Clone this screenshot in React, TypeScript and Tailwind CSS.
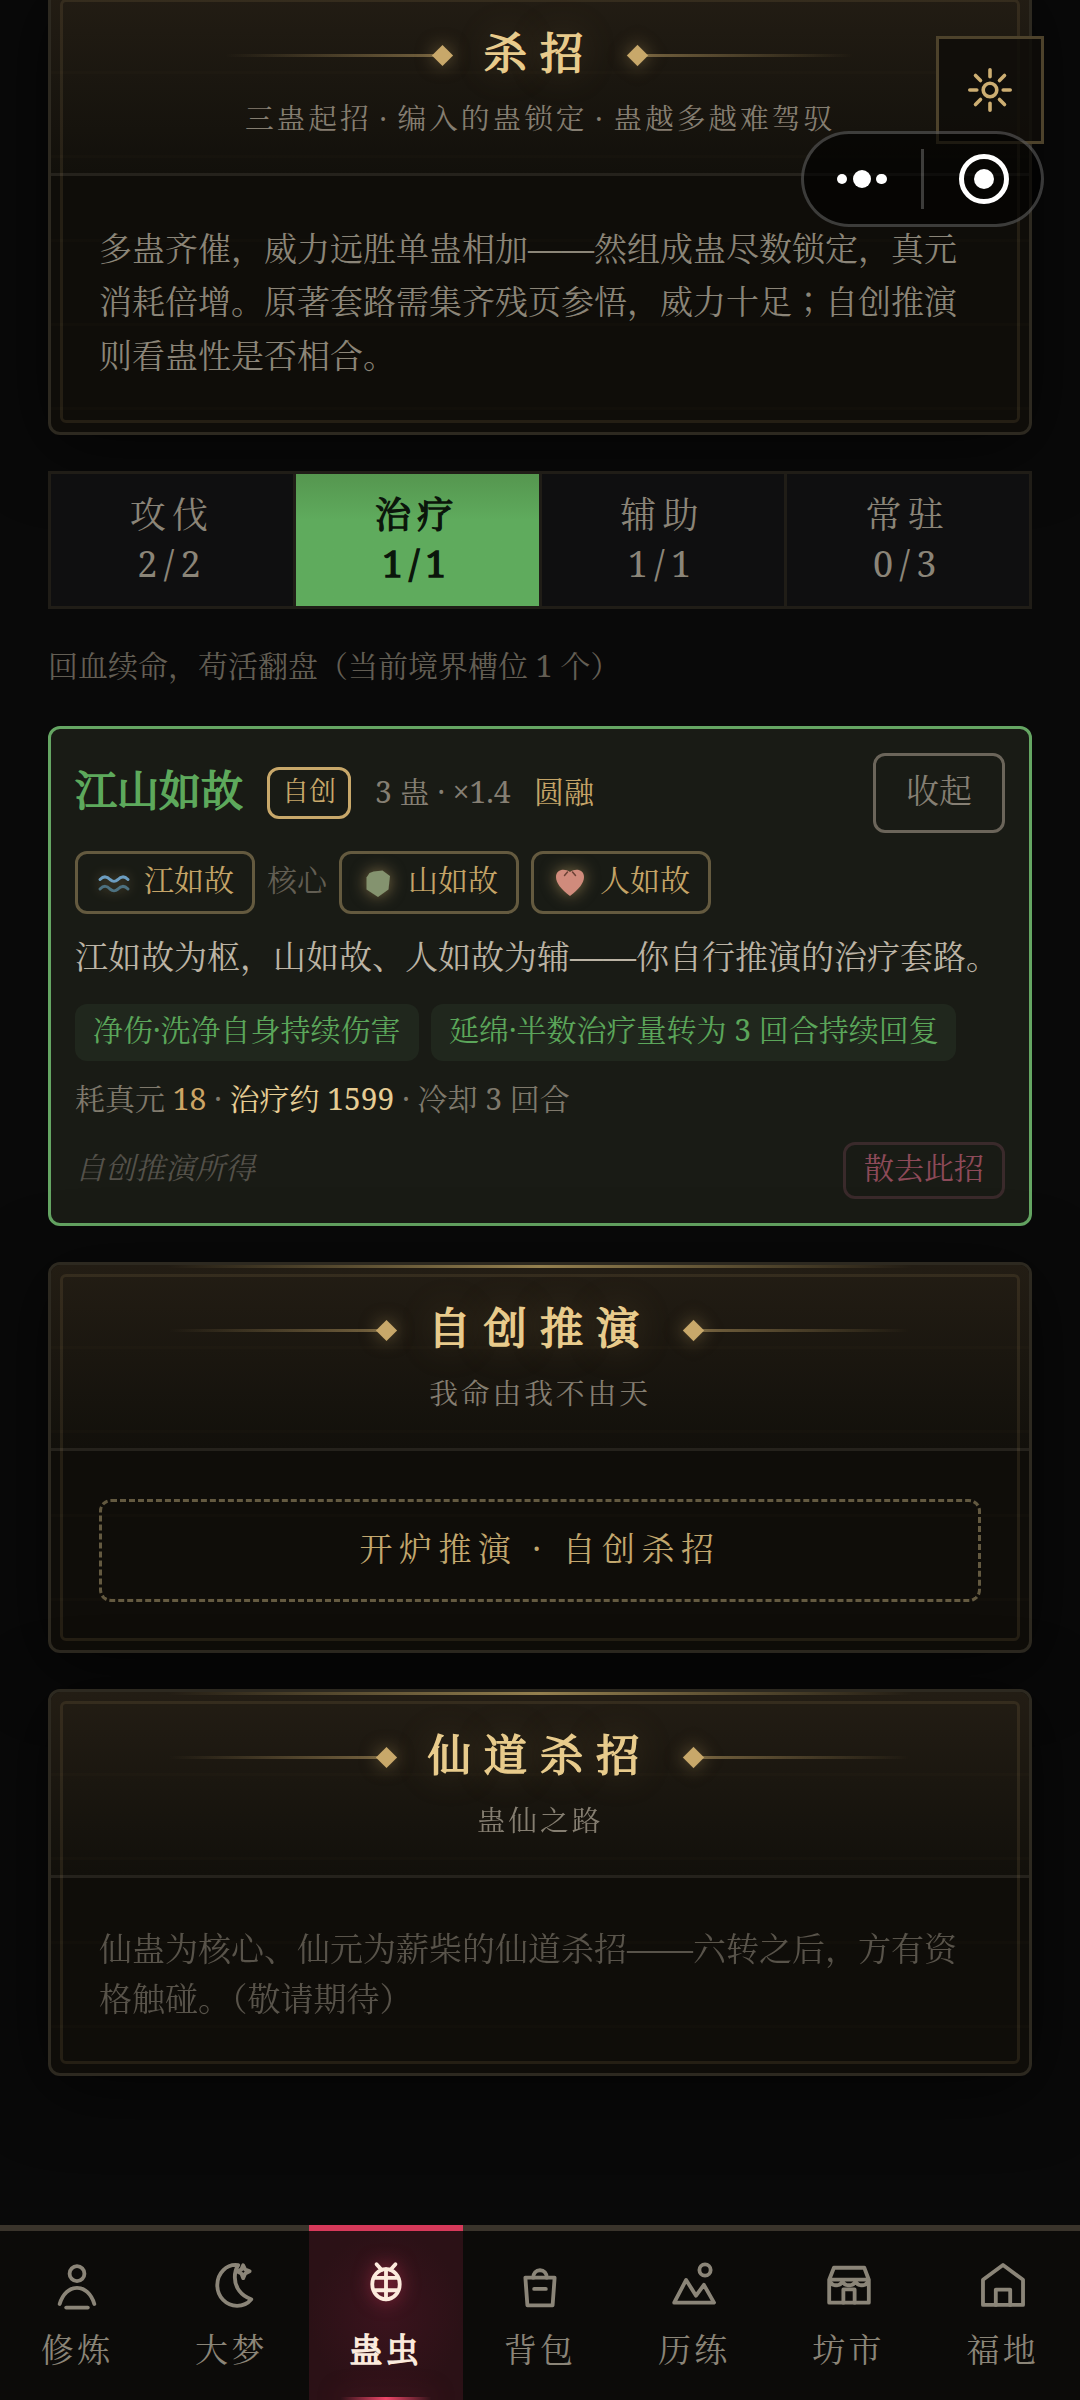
import type { ReactNode } from 'react';
import clsx from 'clsx';

interface PanelProps {
  title: string;
  subtitle: string;
  className?: string;
  children: ReactNode;
}

// Ornament beside a panel title: a fading rule that ends in a diamond
function Ornament({ flip = false }: { flip?: boolean }) {
  return (
    <div className={clsx('flex items-center', flip && 'rotate-180')}>
      <div className="h-[3px] w-[210px] bg-linear-to-r from-transparent to-[#c8a86a]/50" />
      <div className="w-[15px] h-[15px] rotate-45 bg-[#c8a86a] shadow-[0_0_18px_rgba(200,168,106,0.5)]" />
    </div>
  );
}

function Panel({ title, subtitle, className, children }: PanelProps) {
  return (
    <section
      className={clsx(
        'relative shrink-0 rounded-[12px] border-[3px] border-[#2d2920] bg-[#0f0d09] shadow-[0_12px_72px_rgba(0,0,0,0.6)]',
        className,
      )}
    >
      <header className="h-[186px] pt-[33px] rounded-t-[9px] border-b-[3px] border-[#25221c] bg-linear-to-b from-[#231d14] to-[#12100b]">
        <div className="flex h-[65px] items-center justify-center gap-[34px]">
          <Ornament />
          <h2 className="-translate-y-[3px] text-[43.2px] leading-[65px] tracking-[12.96px] text-[#e8cb8c] [-webkit-text-stroke:1.6px_#e8cb8c] [text-shadow:0_0_36px_rgba(200,168,106,0.35)]">
            {title}
          </h2>
          <Ornament flip />
        </div>
        <p className="mt-[7px] text-center text-[28.8px] leading-[46px] tracking-[2.88px] [word-spacing:-2.5px] text-[#857e71]">
          {subtitle}
        </p>
      </header>
      <div className="p-[48px]">{children}</div>

      {/* decorations */}
      <div className="absolute inset-x-[12%] top-0 h-[3px] bg-linear-to-r from-transparent via-[#94804f] to-transparent" />
      <div className="absolute inset-[9px] rounded-[6px] border-[3px] border-[#c8a86a]/12 pointer-events-none" />
      <div className="absolute inset-0 pointer-events-none bg-[repeating-linear-gradient(180deg,transparent_0px,transparent_81px,rgba(200,168,106,0.02)_81px,rgba(200,168,106,0.02)_84px)]" />
    </section>
  );
}

const tabs = [
  { name: '攻伐', count: '2/2' },
  { name: '治疗', count: '1/1', active: true },
  { name: '辅助', count: '1/1' },
  { name: '常驻', count: '0/3' },
];

function WaveIcon() {
  return (
    <svg viewBox="0 0 36 36" className="w-[36px] h-[36px] drop-shadow-[0_0_6px_rgba(200,168,106,0.4)]" fill="none" strokeWidth="3" strokeLinecap="round">
      <path d="M4 14.500c4-4 7-3 10 0 3 2.500 5 2.500 8 0 3-3 6-4 10 0" stroke="#6c9dc0" />
      <path d="M4 24c4-4 7-3 10 0 3 2.500 5 2.500 8 0 3-3 6-4 10 0" stroke="#4d7180" />
    </svg>
  );
}

function StoneIcon() {
  return (
    <svg viewBox="0 0 36 36" className="w-[36px] h-[36px] drop-shadow-[0_0_8px_rgba(200,168,106,0.6)]">
      <path d="M9.500 8l4-1.500 9-1 7.500 5.500-1.500 13.500-10.500 7.500-11.500-7.500v-12z" fill="#84936f" />
    </svg>
  );
}

function HeartIcon() {
  return (
    <svg viewBox="0 0 36 36" className="w-[36px] h-[36px] drop-shadow-[0_0_8px_rgba(200,168,106,0.6)]">
      <path d="M18 31C9 24 4 18 4 12c0-8 9-9 14-5 5-4 14-3 14 5 0 6-5 12-14 19z" fill="#d08b7c" />
      <path d="M12.500 10.500l3-3.500M23.500 10.500l-3-3.500" stroke="#6b4236" strokeWidth="1.500" strokeLinecap="round" />
    </svg>
  );
}

function GuChip({ icon, name }: { icon: ReactNode; name: string }) {
  return (
    <span className="flex h-[63px] items-center gap-[12px] rounded-[12px] border-[3px] border-[#645a3f] px-[18px] text-[30px] text-[#c4a467]">
      {icon}
      <span className="-translate-y-[3px]">{name}</span>
    </span>
  );
}

const navItems = [
  {
    label: '修炼',
    icon: (
      <>
        <circle cx="12" cy="6.5" r="3.3" />
        <path d="M4.3 20C5.6 15.6 8.6 12.8 12 12.8s6.400 2.800 7.700 7.200" />
        <path d="M7.200 21.600h9.600" />
      </>
    ),
  },
  {
    label: '大梦',
    icon: (
      <>
        <path d="M15.200 2.700C10 2 5.900 6.300 5.900 11.600c0 5.100 3.900 9.200 8.800 9.200 2.500 0 4.800-1 6.300-2.900-4.400-1.400-7.300-5.200-7.300-9.800 0-2 .5-3.900 1.500-5.400z" />
        <path d="M17.400 2.800l.9 1.900 2 .8-2 .9-.9 2.100-.8-2.100-2-.9 2-.8z" />
      </>
    ),
  },
  {
    label: '蛊虫',
    active: true,
    icon: (
      <>
        <ellipse cx="12" cy="11.200" rx="6.100" ry="6.700" />
        <path d="M12 4.500v13.400M7.200 8.400h9.600M7.200 13.900h9.600M10 4.800L7.800 2.300M14 4.800l2.200-2.500" />
      </>
    ),
  },
  {
    label: '背包',
    icon: (
      <>
        <path d="M5.500 8.300h13l-.9 12.300H6.400z" />
        <path d="M9 8.300C9 6.300 10.200 5 12 5s3 1.300 3 3.300M9.400 13.300h5.200" />
      </>
    ),
  },
  {
    label: '历练',
    icon: (
      <>
        <path d="M3.200 19.400L8.500 9.300l4.400 7 3.500-4.800 4.500 7.900z" />
        <circle cx="16.900" cy="4.900" r="2.500" />
      </>
    ),
  },
  {
    label: '坊市',
    icon: (
      <>
        <path d="M5.300 3.900h13.500l2 5.300v10.200H3.200V9.200zM3.200 9.200h17.600" />
        <path d="M3.500 9.500c.6 2.900 5 2.900 5.600 0 .6 2.900 5.200 2.900 5.800 0 .6 2.900 5 2.900 5.600 0" />
        <path d="M9.500 19.400v-5.900h5v5.900" />
      </>
    ),
  },
  {
    label: '福地',
    icon: (
      <>
        <path d="M12 2.700l8.900 6.500v11.200H3.100V9.200z" />
        <path d="M8.800 20.400v-6.800h6.400v6.800" />
      </>
    ),
  },
];

export default function App() {
  return (
    <div
      lang="zh-CN"
      className="relative flex h-[2400px] w-[1080px] flex-col overflow-hidden bg-[#090909] font-['Noto_Serif','Noto_Serif_CJK_SC','Noto_Sans_CJK_SC',serif] font-normal"
    >
      <main className="flex flex-1 flex-col px-[48px]">
        <Panel title="杀招" subtitle="三蛊起招 · 编入的蛊锁定 · 蛊越多越难驾驭" className="-mt-[13px] h-[448px]">
          <p className="-translate-y-[2px] text-[33px] leading-[53.33px] text-[#8b8578]">
            多蛊齐催，威力远胜单蛊相加——然组成蛊尽数锁定，真元消耗倍增。原著套路需集齐残页参悟，威力十足
            <span lang="zh-TW" className="font-['Noto_Serif_CJK_TC','Noto_Sans_CJK_TC',serif] leading-none">；</span>
            自创推演则看蛊性是否相合。
          </p>
        </Panel>

        <div className="relative mt-[36px] grid h-[138px] shrink-0 grid-cols-4 gap-[3px] border-[3px] border-[#201d17] bg-[#201d17]">
          {tabs.map((tab) => (
            <button
              key={tab.name}
              className={clsx(
                'flex flex-col items-center justify-center pb-[3px] text-[36px] leading-[49px] tracking-[6.4px]',
                tab.active
                  ? 'bg-[#5ca75a] bg-linear-to-b from-[#55964f] to-[#5fab5d] to-35% text-[#0b150b] [-webkit-text-stroke:1.4px_#0b150b]'
                  : 'bg-[#0f0f10] text-[#8b8578]',
              )}
            >
              <span>{tab.name}</span>
              <span>{tab.count}</span>
            </button>
          ))}
        </div>

        <p className="relative flex h-[117px] shrink-0 items-center pb-[5px] text-[30px] text-[#635e54]">
          回血续命，苟活翻盘（当前境界槽位 1 个）
        </p>

        <section className="relative flex h-[500px] shrink-0 flex-col gap-[18px] rounded-[12px] border-[3px] border-[#65a663] bg-[#191b15] p-[24px] text-[30px]">
          <div className="flex h-[80px] shrink-0 items-center">
            <h3 className="-translate-y-[4px] text-[42px] text-[#5da95c] [-webkit-text-stroke:1.6px_#5da95c]">江山如故</h3>
            <span className="ml-[24px] flex h-[52px] items-center rounded-[12px] border-[3px] border-[#c8a86a] px-[12px] pb-[3px] text-[27px] text-[#c8a86a]">
              自创
            </span>
            <span className="ml-[24px] w-[135px] pb-[3px] whitespace-nowrap text-[#857f73]">3 蛊 · ×1.4</span>
            <span className="ml-[24px] pb-[3px] text-[#c4a467]">圆融</span>
            <button className="ml-auto flex h-[80px] w-[132px] items-center justify-center rounded-[12px] border-[3px] border-[#6b655a] pb-[5px] text-[33px] text-[#857f73]">
              收起
            </button>
          </div>

          <div className="flex shrink-0 items-center gap-[12px]">
            <GuChip icon={<WaveIcon />} name="江如故" />
            <span className="-translate-y-[3px] text-[#625e53]">核心</span>
            <GuChip icon={<StoneIcon />} name="山如故" />
            <GuChip icon={<HeartIcon />} name="人如故" />
          </div>

          <p className="-translate-y-[2px] shrink-0 whitespace-nowrap text-[33px] leading-[54px] text-[#bcb4a5]">
            江如故为枢，山如故、人如故为辅——你自行推演的治疗套路。
          </p>

          <div className="flex shrink-0 gap-[12px] leading-[45px] whitespace-nowrap text-[#5ba65a]">
            <span className="w-[344px] rounded-[12px] bg-[#20271d] px-[18px] pt-[3px] pb-[9px]">净伤·洗净自身持续伤害</span>
            <span className="w-[525px] rounded-[12px] bg-[#20271d] px-[18px] pt-[3px] pb-[9px]">延绵·半数治疗量转为 3 回合持续回复</span>
          </div>

          <p className="-translate-y-[3px] shrink-0 leading-[45px] text-[#7f796c]">
            耗真元 <span className="text-[#cda566]">18</span> · <span className="text-[#e6cd94]">治疗约 1599</span> · 冷却 3 回合
          </p>

          <div className="flex shrink-0 items-center justify-between">
            <span className="-translate-y-[3px] italic text-[#54514a]">自创推演所得</span>
            <button className="h-[57px] rounded-[12px] border-[3px] border-[#3a2a2b] px-[18px] pb-[6px] text-[#8d4a59]">散去此招</button>
          </div>
        </section>

        <Panel title="自创推演" subtitle="我命由我不由天" className="mt-[36px] h-[391px]">
          <button className="block h-[103px] w-full rounded-[12px] border-[3px] border-dashed border-[#635940] pb-[4px] text-[33px] tracking-[6.500px] text-[#c2a76e]">
            开炉推演 · 自创杀招
          </button>
        </Panel>

        <Panel title="仙道杀招" subtitle="蛊仙之路" className="mt-[36px]">
          <p className="-translate-y-[2px] text-[33px] leading-[49.5px] text-[#58534a]">
            仙蛊为核心、仙元为薪柴的仙道杀招——六转之后，方有资格触碰。（敬请期待）
          </p>
        </Panel>
      </main>

      <nav className="relative grid h-[175px] shrink-0 grid-cols-7 bg-[#0c0b09]">
        {navItems.map((item) => (
          <button
            key={item.label}
            className={clsx(
              'relative flex flex-col items-center border-t-[6px] pt-[28px]',
              item.active
                ? 'border-[#d6395a] bg-[#2b1116] bg-radial from-[#3a131d] to-[#2b1116] to-70% text-[#fcebdd] [-webkit-text-stroke:1.4px_#fcebdd]'
                : 'border-[#3a342b] text-[#8b8578]',
            )}
          >
            <svg
              viewBox="0 0 24 24"
              className={clsx('w-[54px] h-[54px]', item.active && 'drop-shadow-[0_0_9px_rgba(214,57,90,0.6)]')}
              fill="none"
              stroke="currentColor"
              strokeWidth="1.7"
              strokeLinecap="round"
              strokeLinejoin="round"
            >
              {item.icon}
            </svg>
            <span className="mt-[12px] text-[33px] leading-[50px] tracking-[3.300px]">{item.label}</span>
            {item.active && (
              <span className="absolute bottom-0 h-[3px] w-[92px] bg-linear-to-r from-transparent via-[#f0476a] to-transparent shadow-[0_0_24px_rgba(214,57,90,0.5)]" />
            )}
          </button>
        ))}
      </nav>

      {/* floating theme toggle and mini-program capsule */}
      <button className="absolute top-[36px] right-[36px] flex h-[108px] w-[108px] items-center justify-center border-[3px] border-[#4d422b] bg-[#0f0d09]/85 text-[#cdae72]">
        <svg viewBox="0 0 48 48" className="w-[48px] h-[48px]" fill="none" stroke="currentColor" strokeWidth="3.6" strokeLinecap="round">
          <circle cx="24" cy="24" r="6.800" />
          <path d="M24 3.800v7M24 37.200v7M3.800 24h7M37.200 24h7M9.500 9.500l5 5M33.500 33.500l5 5M9.500 38.500l5-5M33.500 14.500l5-5" />
        </svg>
      </button>
      <div className="absolute top-[131px] right-[36px] flex h-[96px] w-[243px] items-center rounded-full border-[3px] border-white/22 bg-black/60">
        <div className="flex w-[115px] items-center justify-center gap-[5.500px]">
          <span className="w-[10.500px] h-[10.500px] rounded-full bg-white" />
          <span className="w-[18px] h-[18px] rounded-full bg-white" />
          <span className="w-[10.500px] h-[10.500px] rounded-full bg-white" />
        </div>
        <span className="ml-[2px] h-[60px] w-[3px] bg-white/22" />
        <div className="ml-[35px] flex h-[50px] w-[50px] items-center justify-center rounded-full border-[5px] border-white">
          <span className="w-[20px] h-[20px] rounded-full bg-white" />
        </div>
      </div>
    </div>
  );
}
